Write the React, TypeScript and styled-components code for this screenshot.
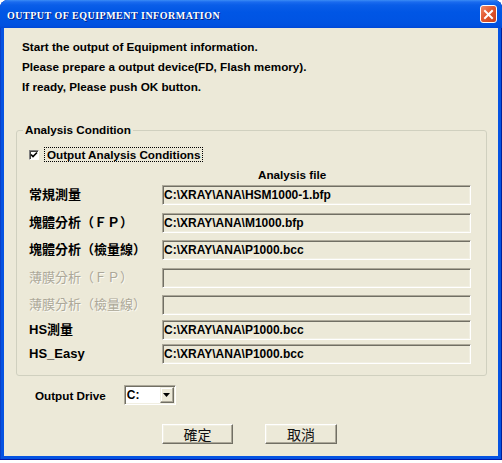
import styled, { createGlobalStyle } from "styled-components";

const GlobalStyle = createGlobalStyle`
  html, body {
    margin: 0;
    padding: 0;
    background: #ffffff;
  }
  body {
    font-family: "Liberation Sans", Arial, "Noto Sans CJK TC", sans-serif;
    color: #000;
  }
`;

const Window = styled.div`
  width: 502px;
  height: 460px;
  box-sizing: border-box;
  display: flex;
  flex-direction: column;
  background: #0553e2;
  border-radius: 8px 8px 0 0;
  box-shadow: inset 0 -1px 0 #0019a8, inset 1px 0 0 #0a40c8, inset -1px 0 0 #00209a;
  overflow: hidden;
`;

const TitleBar = styled.div`
  height: 28px;
  flex: none;
  display: flex;
  align-items: center;
  justify-content: space-between;
  padding: 0 5px 0 7px;
  background: linear-gradient(
    to bottom,
    #3b8cf5 0,
    #1a6bef 2px,
    #0a5ee8 5px,
    #0056e5 12px,
    #0054e3 20px,
    #0050df 26px,
    #0047d6 28px
  );
`;

const Title = styled.span`
  font-family: "Liberation Serif", "Times New Roman", serif;
  font-weight: bold;
  font-size: 10px;
  letter-spacing: 0.5px;
  color: #ffffff;
  padding-top: 2px;
  text-shadow: 1px 1px 0 #0a1e7a;
`;

const CloseButton = styled.div`
  width: 17px;
  height: 18px;
  box-sizing: border-box;
  border: 1px solid #ffffff;
  border-radius: 3px;
  background: linear-gradient(135deg, #f08a68 0%, #e2582f 45%, #c8401c 100%);
  display: flex;
  align-items: center;
  justify-content: center;
`;

const Body = styled.div`
  flex: 1;
  margin: 0 4px 4px;
  background: #ece9d8;
  padding: 9px 11px 0 12px;
  display: flex;
  flex-direction: column;
`;

const Message = styled.div`
  margin-left: 6px;
  font-weight: bold;
  font-size: 11.7px;
  line-height: 20px;
`;

const GroupBox = styled.fieldset`
  margin: 26px 0 0;
  padding: 0 15px 11px 12px;
  border: 1px solid #d0d0bf;
  border-radius: 3px;
  min-width: 0;
`;

const GroupLabel = styled.legend`
  margin-left: -6px;
  padding: 0 2px;
  font-weight: bold;
  font-size: 11.7px;
  line-height: 14px;
`;

const CheckRow = styled.div`
  display: flex;
  align-items: center;
  height: 15px;
  margin-top: 10px;
`;

const CheckBox = styled.span`
  width: 10px;
  height: 10px;
  box-sizing: border-box;
  background: #ffffff;
  border: 1px solid;
  border-color: #808080 #ffffff #ffffff #808080;
  box-shadow: inset 1px 1px 0 #404040;
  display: flex;
  align-items: center;
  justify-content: center;
`;

const FocusLabel = styled.span`
  margin-left: 5px;
  padding: 0 2px;
  border: 1px dotted #000;
  font-weight: bold;
  font-size: 11.7px;
  line-height: 13px;
`;

const ColumnHeader = styled.div`
  margin-top: 6px;
  padding-left: 229px;
  font-weight: bold;
  font-size: 11.7px;
  line-height: 14px;
`;

const Row = styled.div<{ $gap: number }>`
  display: grid;
  grid-template-columns: 133px 1fr;
  align-items: center;
  height: 20px;
  margin-top: ${({ $gap }) => $gap}px;
`;

const RowLabel = styled.span<{ $disabled?: boolean }>`
  font-family: "Liberation Sans", Arial, "Noto Sans CJK TC", sans-serif;
  font-size: 13px;
  line-height: 20px;
  white-space: nowrap;
  font-weight: ${({ $disabled }) => ($disabled ? "normal" : "bold")};
  color: ${({ $disabled }) => ($disabled ? "#aca899" : "#000")};
  text-shadow: ${({ $disabled }) => ($disabled ? "1px 1px 0 #fbfaf4" : "none")};
`;

const Field = styled.div`
  height: 20px;
  box-sizing: border-box;
  border: 1px solid;
  border-color: #aca899 #ffffff #ffffff #aca899;
  box-shadow: inset 1px 1px 0 #716f64, inset -1px -1px 0 #f1efe2;
  background: #ece9d8;
  padding-left: 1px;
  font-weight: bold;
  font-size: 12px;
  line-height: 18px;
  white-space: nowrap;
  overflow: hidden;
`;

const DriveRow = styled.div`
  display: flex;
  align-items: center;
  margin-top: 9px;
  padding-left: 19px;
  gap: 18px;
`;

const DriveLabel = styled.span`
  font-weight: bold;
  font-size: 11.7px;
`;

const Select = styled.div`
  width: 52px;
  height: 20px;
  box-sizing: border-box;
  background: #ffffff;
  border: 1px solid;
  border-color: #aca899 #ffffff #ffffff #aca899;
  box-shadow: inset 1px 1px 0 #716f64, inset -1px -1px 0 #f1efe2;
  display: flex;
  align-items: center;
  justify-content: space-between;
  padding: 1px 1px 1px 2px;
`;

const SelectValue = styled.span`
  font-weight: bold;
  font-size: 12px;
`;

const DropButton = styled.span`
  width: 14px;
  height: 16px;
  box-sizing: border-box;
  background: #ece9d8;
  border: 1px solid;
  border-color: #f1efe2 #716f64 #716f64 #f1efe2;
  box-shadow: inset -1px -1px 0 #aca899, inset 1px 1px 0 #ffffff;
  display: flex;
  align-items: center;
  justify-content: center;
`;

const ButtonRow = styled.div`
  display: flex;
  justify-content: center;
  gap: 32px;
  margin-top: 19px;
  padding-right: 4px;
`;

const Button = styled.button<{ $width: number }>`
  width: ${({ $width }) => $width}px;
  height: 20px;
  box-sizing: border-box;
  padding: 0;
  background: #ece9d8;
  border: 1px solid;
  border-color: #ffffff #716f64 #716f64 #ffffff;
  box-shadow: inset -1px -1px 0 #aca899, inset 1px 1px 0 #f1efe2;
  font-family: "Noto Sans CJK TC", sans-serif;
  font-size: 14px;
  line-height: 18px;
  color: #111;
`;

type AnalysisRow = {
  label: string;
  file: string;
  disabled?: boolean;
  gap: number;
};

const rows: AnalysisRow[] = [
  { label: "常規測量", file: "C:\\XRAY\\ANA\\HSM1000-1.bfp", gap: 3 },
  { label: "塊體分析（ＦＰ）", file: "C:\\XRAY\\ANA\\M1000.bfp", gap: 7.5 },
  { label: "塊體分析（檢量線）", file: "C:\\XRAY\\ANA\\P1000.bcc", gap: 7.5 },
  { label: "薄膜分析（ＦＰ）", file: "", disabled: true, gap: 7.5 },
  { label: "薄膜分析（檢量線）", file: "", disabled: true, gap: 7.5 },
  { label: "HS測量", file: "C:\\XRAY\\ANA\\P1000.bcc", gap: 4.5 },
  { label: "HS_Easy", file: "C:\\XRAY\\ANA\\P1000.bcc", gap: 4.5 },
];

export default function App() {
  return (
    <>
      <GlobalStyle />
      <Window>
        <TitleBar>
          <Title>OUTPUT OF EQUIPMENT INFORMATION</Title>
          <CloseButton>
            <svg width="11" height="11" viewBox="0 0 11 11">
              <path
                d="M2 2 L9 9 M9 2 L2 9"
                stroke="#ffffff"
                strokeWidth="2"
                strokeLinecap="square"
              />
            </svg>
          </CloseButton>
        </TitleBar>
        <Body>
          <Message>
            <div>Start the output of Equipment information.</div>
            <div>Please prepare a output device(FD, Flash memory).</div>
            <div>If ready, Please push OK button.</div>
          </Message>

          <GroupBox>
            <GroupLabel>Analysis Condition</GroupLabel>
            <CheckRow>
              <CheckBox>
                <svg width="8" height="8" viewBox="0 0 8 8">
                  <path d="M1 3.5 L3 5.5 L7 1.5" stroke="#000" strokeWidth="1.6" fill="none" />
                </svg>
              </CheckBox>
              <FocusLabel>Output Analysis Conditions</FocusLabel>
            </CheckRow>
            <ColumnHeader>Analysis file</ColumnHeader>
            {rows.map((row) => (
              <Row key={row.label} $gap={row.gap}>
                <RowLabel $disabled={row.disabled}>{row.label}</RowLabel>
                <Field>{row.file}</Field>
              </Row>
            ))}
          </GroupBox>

          <DriveRow>
            <DriveLabel>Output Drive</DriveLabel>
            <Select>
              <SelectValue>C:</SelectValue>
              <DropButton>
                <svg width="7" height="4" viewBox="0 0 7 4">
                  <path d="M0 0 H7 L3.5 4 Z" fill="#000" />
                </svg>
              </DropButton>
            </Select>
          </DriveRow>

          <ButtonRow>
            <Button $width={71}>確定</Button>
            <Button $width={72}>取消</Button>
          </ButtonRow>
        </Body>
      </Window>
    </>
  );
}
